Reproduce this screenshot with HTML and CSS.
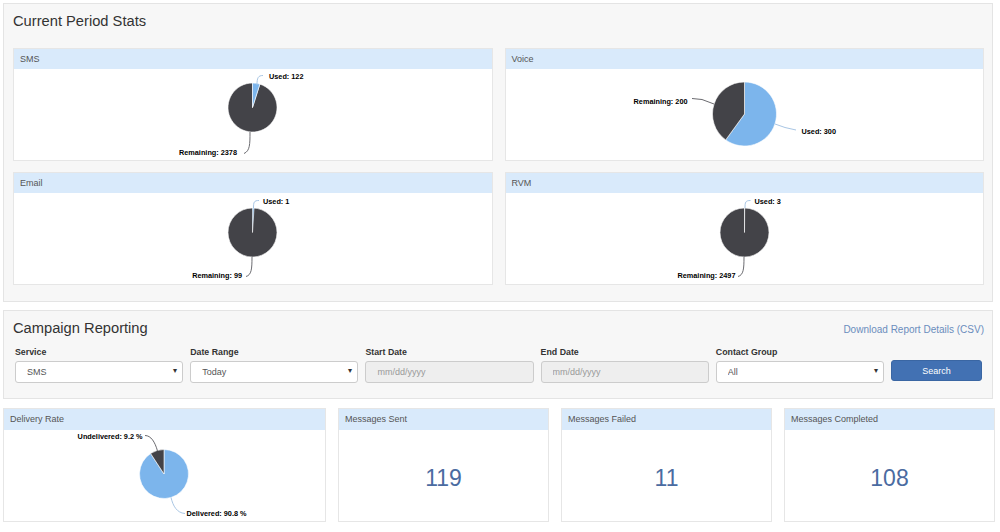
FILE: index.html
```html
<!DOCTYPE html>
<html lang="en">
<head>
    <meta charset="UTF-8">
    <meta name="viewport" content="width=device-width, initial-scale=1.0">
    <title>Dashboard</title>
    <link rel="stylesheet" href="styles.css">
</head>
<body>

    <!-- Current Period Stats -->
    <div class="box stats-box">
        <h2>Current Period Stats</h2>
        <div class="stats-grid">
            <div class="panel">
                <div class="panel-heading">SMS</div>
                <div class="chart-body">
                    <svg class="pie" width="300" height="91" viewBox="0 0 300 91">
                        <g transform="translate(50,0)">
                            <path class="slice-dark" d="M99.5,38.5 L106.9,15.14 A24.5,24.5 0 1 1 99.5,14 Z"/>
                            <path class="slice-blue" d="M99.5,38.5 L99.5,14 A24.5,24.5 0 0 1 106.9,15.14 Z"/>
                            <path class="line-blue" d="M104,16 C104,9 105,6.5 110,6.5"/>
                            <path class="line-dark" d="M97,63 C97,75 97,82 91,84.5"/>
                            <text x="116" y="9.5">Used: 122</text>
                            <text x="84" y="85.5" text-anchor="end">Remaining: 2378</text>
                        </g>
                    </svg>
                </div>
            </div>
            <div class="panel">
                <div class="panel-heading">Voice</div>
                <div class="chart-body">
                    <svg class="pie" width="300" height="91" viewBox="0 0 300 91">
                        <g transform="translate(50,0)">
                            <path class="slice-blue" d="M100.5,45 L100.5,13 A32,32 0 1 1 81.69,70.89 Z"/>
                            <path class="slice-dark" d="M100.5,45 L81.69,70.89 A32,32 0 0 1 100.5,13 Z"/>
                            <path class="line-dark" d="M48,29.5 L58,30.5 L70,35"/>
                            <path class="line-blue" d="M131,55 L141,58.5 L152,61"/>
                            <text x="43.5" y="34.5" text-anchor="end">Remaining: 200</text>
                            <text x="157.5" y="64.5">Used: 300</text>
                        </g>
                    </svg>
                </div>
            </div>
            <div class="panel">
                <div class="panel-heading">Email</div>
                <div class="chart-body">
                    <svg class="pie" width="300" height="91" viewBox="0 0 300 91">
                        <g transform="translate(50,0)">
                            <circle class="slice-dark" cx="99.5" cy="39.5" r="24.5"/>
                            <path class="slice-blue" d="M99.5,39.5 L99.5,15 A24.5,24.5 0 0 1 101.04,15.05 Z"/>
                            <path class="line-blue" d="M100.5,15 C100.5,9 101,7.5 106,7.5"/>
                            <path class="line-dark" d="M99,64 C99,76 98.5,82 93,83.5"/>
                            <text x="110" y="10.5">Used: 1</text>
                            <text x="89" y="84.5" text-anchor="end">Remaining: 99</text>
                        </g>
                    </svg>
                </div>
            </div>
            <div class="panel">
                <div class="panel-heading">RVM</div>
                <div class="chart-body">
                    <svg class="pie" width="300" height="91" viewBox="0 0 300 91">
                        <g transform="translate(50,0)">
                            <circle class="slice-dark" cx="100.5" cy="39.5" r="24.5"/>
                            <path class="slice-blue" d="M100.5,39.5 L100.5,15 A24.5,24.5 0 0 1 100.7,15 Z"/>
                            <path class="line-blue" d="M101,15 C101,9 101.5,7.5 106.5,7.5"/>
                            <path class="line-dark" d="M100,64 C100,76 99.5,82 94,83.5"/>
                            <text x="110.5" y="10.5">Used: 3</text>
                            <text x="91.5" y="84.5" text-anchor="end">Remaining: 2497</text>
                        </g>
                    </svg>
                </div>
            </div>
        </div>
    </div>

    <!-- Campaign Reporting -->
    <div class="box campaign-box">
        <div class="campaign-head">
            <h2>Campaign Reporting</h2>
            <a href="#" class="download-link">Download Report Details (CSV)</a>
        </div>
        <form class="filter-row">
            <div class="field">
                <label for="service">Service</label>
                <div class="select-wrap">
                    <select id="service">
                        <option>SMS</option>
                        <option>Voice</option>
                        <option>Email</option>
                        <option>RVM</option>
                    </select>
                    <span class="caret">&#9662;</span>
                </div>
            </div>
            <div class="field">
                <label for="date-range">Date Range</label>
                <div class="select-wrap">
                    <select id="date-range">
                        <option>Today</option>
                        <option>Yesterday</option>
                        <option>Custom</option>
                    </select>
                    <span class="caret">&#9662;</span>
                </div>
            </div>
            <div class="field">
                <label for="start-date">Start Date</label>
                <input type="text" id="start-date" placeholder="mm/dd/yyyy" disabled>
            </div>
            <div class="field">
                <label for="end-date">End Date</label>
                <input type="text" id="end-date" placeholder="mm/dd/yyyy" disabled>
            </div>
            <div class="field">
                <label for="contact-group">Contact Group</label>
                <div class="select-wrap">
                    <select id="contact-group">
                        <option>All</option>
                    </select>
                    <span class="caret">&#9662;</span>
                </div>
            </div>
            <button type="button" class="search-btn">Search</button>
        </form>
    </div>

    <!-- Results -->
    <div class="results-row">
        <div class="panel">
            <div class="panel-heading tall">Delivery Rate</div>
            <div class="chart-body short">
                <svg class="pie" width="300" height="91" viewBox="0 0 300 91">
                    <g transform="translate(50,0)">
                        <path class="slice-blue" d="M99,44 L99,19.5 A24.5,24.5 0 1 1 85.61,23.48 Z"/>
                        <path class="slice-dark" d="M99,44 L85.61,23.48 A24.5,24.5 0 0 1 99,19.5 Z"/>
                        <path class="line-dark" d="M80,5.5 C86,5.5 90,12 92.5,21"/>
                        <path class="line-blue" d="M106,67.5 C108,76 112,83 120,83.5"/>
                        <text x="77.5" y="8.5" text-anchor="end">Undelivered: 9.2 %</text>
                        <text x="121.5" y="85.5">Delivered: 90.8 %</text>
                    </g>
                </svg>
            </div>
        </div>
        <div class="panel">
            <div class="panel-heading tall">Messages Sent</div>
            <div class="stat-body">119</div>
        </div>
        <div class="panel">
            <div class="panel-heading tall">Messages Failed</div>
            <div class="stat-body">11</div>
        </div>
        <div class="panel">
            <div class="panel-heading tall">Messages Completed</div>
            <div class="stat-body">108</div>
        </div>
    </div>

</body>
</html>
```

FILE: styles.css
```css
body {
    margin: 0;
    padding: 3px 7px 0 3px;
    font-family: "Liberation Sans", Arial, sans-serif;
    background-color: #fff;
    color: #333;
}

/* Gray section boxes */
.box {
    background-color: #f7f7f7;
    border: 1px solid #e4e4e4;
}

.box h2 {
    margin: 0;
    font-size: 14.7px;
    font-weight: normal;
    line-height: 20px;
    color: #333;
}

.stats-box {
    padding: 7px 8px 16px 9px;
}

.stats-box h2 {
    margin-bottom: 17px;
}

.stats-grid {
    display: grid;
    grid-template-columns: 1fr 1fr;
    column-gap: 12px;
    row-gap: 11px;
}

/* Panels */
.panel {
    background-color: #fff;
    border: 1px solid #e6e6e6;
}

.panel-heading {
    height: 20px;
    line-height: 20px;
    padding: 0 6px;
    background-color: #d9eafb;
    font-size: 9px;
    color: #555;
}

.panel-heading.tall {
    height: 21px;
    line-height: 21px;
}

.chart-body {
    height: 91px;
    display: flex;
    justify-content: center;
    overflow: hidden;
}

.pie {
    flex-shrink: 0;
}

.pie text {
    font-family: "Liberation Sans", Arial, sans-serif;
    font-size: 7.3px;
    font-weight: bold;
    fill: #000;
}

.slice-blue {
    fill: #7cb5ec;
    stroke: #fff;
    stroke-width: 0.6;
}

.slice-dark {
    fill: #434348;
    stroke: #fff;
    stroke-width: 0.6;
}

.line-blue,
.line-dark {
    fill: none;
    stroke-width: 1;
}

.line-blue {
    stroke: #a9c6e4;
}

.line-dark {
    stroke: #6b6b70;
}

/* Campaign Reporting */
.campaign-box {
    margin-top: 8px;
    padding: 7px 10px 15px 11px;
}

.campaign-head {
    display: flex;
    justify-content: space-between;
    align-items: center;
    margin-left: -2px;
}

.download-link {
    font-size: 10px;
    color: #6b8dbd;
    text-decoration: none;
    margin-right: -2px;
    margin-top: 2px;
}

.filter-row {
    margin-top: 8px;
    display: grid;
    grid-template-columns: repeat(5, 1fr) 91px;
    column-gap: 7px;
    align-items: end;
}

.field {
    display: flex;
    flex-direction: column;
}

.field label {
    font-size: 8.8px;
    font-weight: bold;
    line-height: 12px;
    margin-bottom: 3px;
    color: #333;
}

.select-wrap {
    position: relative;
}

.field select,
.field input {
    width: 100%;
    height: 22px;
    box-sizing: border-box;
    padding: 0 11px;
    border: 1px solid #ccc;
    border-radius: 3px;
    background-color: #fff;
    font-family: "Liberation Sans", Arial, sans-serif;
    font-size: 9px;
    color: #555;
    appearance: none;
    -webkit-appearance: none;
    margin: 0;
}

.field input {
    background-color: #eee;
}

.field input::placeholder {
    color: #999;
}

.caret {
    position: absolute;
    right: 6px;
    top: 5px;
    font-size: 8px;
    color: #333;
    pointer-events: none;
}

.search-btn {
    height: 21px;
    margin-bottom: 2px;
    padding: 0;
    background-color: #4271b3;
    border: 1px solid #3a66a3;
    border-radius: 3px;
    color: #fff;
    font-family: "Liberation Sans", Arial, sans-serif;
    font-size: 9px;
    cursor: pointer;
}

/* Result panels */
.results-row {
    margin-top: 9px;
    margin-right: -2px;
    display: grid;
    grid-template-columns: 323px repeat(3, 1fr);
    column-gap: 12px;
}

.stat-body {
    height: 91px;
    box-sizing: border-box;
    padding-top: 5px;
    display: flex;
    align-items: center;
    justify-content: center;
    font-size: 23px;
    color: #4a6ba1;
}
```
